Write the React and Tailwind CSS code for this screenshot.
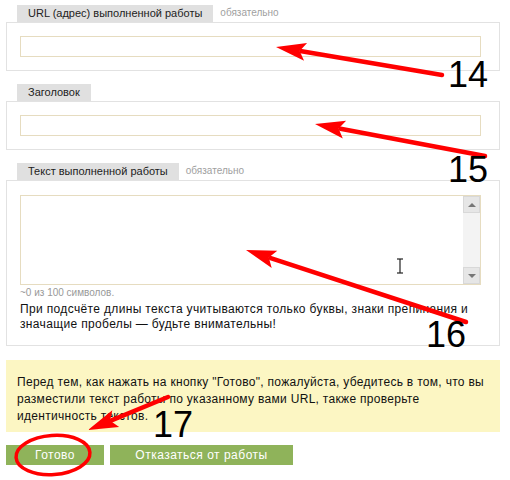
const font = { fontFamily: '"Liberation Sans", Arial, sans-serif' };

function Tab({ label, note }) {
  return (
    <div className="flex items-end ml-[11px] h-[17px]">
      <div className="bg-[#e0e0e0] h-full px-[11px] flex items-center text-[11px] text-[#222]">{label}</div>
      {note && <div className="ml-[7px] text-[10px] text-[#a0a0a0] pb-[2px]">{note}</div>}
    </div>
  );
}

function Arrow({ from, to, head = 30, half = 9 }) {
  const dx = to[0] - from[0];
  const dy = to[1] - from[1];
  const len = Math.hypot(dx, dy);
  const ux = dx / len;
  const uy = dy / len;
  const bx = to[0] - ux * head;
  const by = to[1] - uy * head;
  const pts = [
    `${to[0]},${to[1]}`,
    `${bx - uy * half},${by + ux * half}`,
    `${bx + ux * 6},${by + uy * 6}`,
    `${bx + uy * half},${by - ux * half}`,
  ].join(" ");
  return (
    <g>
      <line x1={from[0]} y1={from[1]} x2={bx + ux * 4} y2={by + uy * 4} stroke="#ff0000" strokeWidth="4.5" strokeLinecap="round" />
      <polygon points={pts} fill="#ff0000" />
    </g>
  );
}

export default function App() {
  return (
    <div className="relative w-[510px] h-[480px] bg-white overflow-hidden" style={font}>
      <div className="pt-[5px]">
        {/* URL */}
        <div className="ml-[6px] w-[494px]">
          <Tab label="URL (адрес) выполненной работы" note="обязательно" />
          <div className="border border-[#e2e2e2] pl-[13px] pr-[18px] py-[13px]">
            <div className="h-[21px] border border-[#e6dcc0] bg-white" />
          </div>
        </div>

        {/* title */}
        <div className="ml-[6px] w-[494px] mt-[13px]">
          <Tab label="Заголовок" />
          <div className="border border-[#e2e2e2] pl-[13px] pr-[18px] py-[13px]">
            <div className="h-[21px] border border-[#e6dcc0] bg-white" />
          </div>
        </div>

        {/* text */}
        <div className="ml-[6px] w-[494px] mt-[13px]">
          <Tab label="Текст выполненной работы" note="обязательно" />
          <div className="border border-[#e2e2e2] pl-[13px] pr-[18px] pt-[14px] pb-[13px]">
            <div className="h-[90px] border border-[#e6dcc0] bg-white flex justify-end">
              <div className="w-[17px] flex flex-col bg-[#f2f2f2]">
                <div className="h-[17px] bg-[#e6e6e6] border border-[#d8d8d8] flex items-center justify-center">
                  <div className="w-0 h-0 border-l-[4px] border-r-[4px] border-b-[4px] border-l-transparent border-r-transparent border-b-[#777]" />
                </div>
                <div className="flex-1 bg-[#f3f3f3]" />
                <div className="h-[17px] bg-[#e6e6e6] border border-[#d8d8d8] flex items-center justify-center">
                  <div className="w-0 h-0 border-l-[4px] border-r-[4px] border-t-[4px] border-l-transparent border-r-transparent border-t-[#777]" />
                </div>
              </div>
            </div>
            <div className="text-[10px] text-[#999] mt-[1px] leading-[14px]">~0 из 100 символов.</div>
            <p className="text-[12px] text-[#111] leading-[15px] mt-[2px] tracking-[0.35px]">
              При подсчёте длины текста учитываются только буквы, знаки препинания и значащие пробелы — будьте внимательны!
            </p>
          </div>
        </div>

        {/* notice */}
        <div className="ml-[6px] w-[494px] mt-[14px] bg-[#fcf6c3] pl-[11px] pr-[12px] pt-[14px] pb-[13px] h-[72px]">
          <p className="text-[12px] text-[#111] leading-[17px] tracking-[0.3px]">
            Перед тем, как нажать на кнопку "Готово", пожалуйста, убедитесь в том, что вы разместили текст работы по указанному вами URL, также проверьте идентичность текстов.
          </p>
        </div>

        {/* actions */}
        <div className="ml-[6px] mt-[13px] flex gap-[6px]">
          <button className="w-[98px] h-[20px] bg-[#8fb35a] text-white text-[12px] tracking-[0.5px]">Готово</button>
          <button className="w-[183px] h-[20px] bg-[#8fb35a] text-white text-[12px] tracking-[0.5px]">Отказаться от работы</button>
        </div>
      </div>

      {/* annotations */}
      <svg className="absolute inset-0 pointer-events-none" width="510" height="480" viewBox="0 0 510 480">
        <Arrow from={[442, 75]} to={[276, 47]} />
        <Arrow from={[485, 156]} to={[315, 124]} />
        <Arrow from={[466, 322]} to={[246, 250]} />
        <Arrow from={[168, 397]} to={[88, 430]} />
        <ellipse cx="53" cy="455" rx="37" ry="19.5" fill="none" stroke="#ff0000" strokeWidth="3.5" transform="rotate(-4 53 455)" />
        <g stroke="#222" strokeWidth="1.2" fill="none">
          <line x1="400" y1="259" x2="400" y2="273" />
          <line x1="397" y1="259" x2="403" y2="259" />
          <line x1="397" y1="273" x2="403" y2="273" />
        </g>
      </svg>
      <div className="absolute left-[448px] top-[55px] text-[36px] leading-[40px] text-black">14</div>
      <div className="absolute left-[448px] top-[150px] text-[36px] leading-[40px] text-black">15</div>
      <div className="absolute left-[426px] top-[315px] text-[36px] leading-[40px] text-black">16</div>
      <div className="absolute left-[153px] top-[405px] text-[36px] leading-[40px] text-black">17</div>
    </div>
  );
}
